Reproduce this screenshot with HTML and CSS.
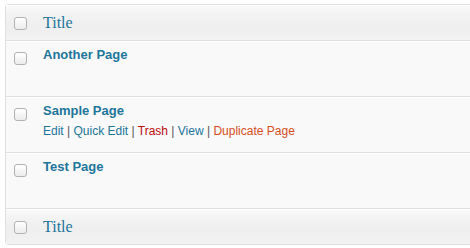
FILE: index.html
```html
<!DOCTYPE html>
<html lang="en">

<head>
    <meta charset="UTF-8">
    <meta name="viewport" content="width=device-width, initial-scale=1.0">
    <title>Pages</title>
    <link rel="stylesheet" href="styles.css">
</head>

<body>
    <div class="wrap">
        <div class="list-table">
            <div class="list-head">
                <span class="check"></span>
                <a href="javascript:;" class="col-title">Title</a>
            </div>

            <div class="list-row">
                <span class="check"></span>
                <div class="row-body">
                    <a href="javascript:;" class="row-title">Another Page</a>
                </div>
            </div>
            <div class="list-row">
                <span class="check"></span>
                <div class="row-body">
                    <a href="javascript:;" class="row-title">Sample Page</a>
                    <div class="row-actions">
                        <a href="javascript:;">Edit</a> <span class="sep">|</span>
                        <a href="javascript:;">Quick Edit</a> <span class="sep">|</span>
                        <a href="javascript:;" class="trash">Trash</a> <span class="sep">|</span>
                        <a href="javascript:;">View</a> <span class="sep">|</span>
                        <a href="javascript:;" class="dup">Duplicate Page</a>
                    </div>
                </div>
            </div>
            <div class="list-row">
                <span class="check"></span>
                <div class="row-body">
                    <a href="javascript:;" class="row-title">Test Page</a>
                </div>
            </div>

            <div class="list-head list-foot">
                <span class="check"></span>
                <a href="javascript:;" class="col-title">Title</a>
            </div>
        </div>
    </div>
</body>

</html>
```

FILE: styles.css
```css
* {
    margin: 0;
    padding: 0;
    box-sizing: border-box;
}

body {
    background: #ffffff;
    font-family: "Liberation Sans", Arial, sans-serif;
}

a {
    text-decoration: none;
    color: #21759b;
}

/* 右侧边框在截图外，用外层裁掉 */
.wrap {
    width: 100%;
    overflow: hidden;
    padding: 4px 0 0 5px;
}

.list-table {
    width: 480px;
    border: 1px solid #dfdfdf;
    border-radius: 3px;
    background: #f9f9f9;
}

.list-head {
    display: flex;
    align-items: center;
    height: 36px;
    border-top: 1px solid #ffffff;
    border-bottom: 1px solid #dfdfdf;
    background: linear-gradient(to bottom, #f9f9f9 0%, #f3f3f3 25%, #efefef 50%, #efefef 75%, #f3f3f3 100%);
}

.list-foot {
    border-bottom: 0;
    height: 35px;
}

.col-title {
    font-family: "Liberation Serif", Georgia, serif;
    font-size: 16px;
    margin-left: 16px;
}

.check {
    flex: none;
    display: block;
    width: 13px;
    height: 13px;
    margin-left: 8px;
    border: 1px solid #b2b2b2;
    border-radius: 3px;
    background: linear-gradient(to bottom, #ffffff, #ececec);
}

.list-row {
    display: flex;
    align-items: flex-start;
    height: 56px;
    border-top: 1px solid #ffffff;
    border-bottom: 1px solid #dfdfdf;
}

.list-row .check {
    margin-top: 10px;
}

.row-body {
    margin-left: 16px;
    padding-top: 4px;
}

.row-title {
    display: block;
    font-size: 13px;
    font-weight: bold;
    line-height: 18px;
}

.row-actions {
    margin-top: 3px;
    font-size: 12px;
    line-height: 16px;
    color: #666666;
}

.row-actions .sep {
    color: #555555;
}

.row-actions .trash {
    color: #bc0b0b;
}

.row-actions .dup {
    color: #d54e21;
}
```
